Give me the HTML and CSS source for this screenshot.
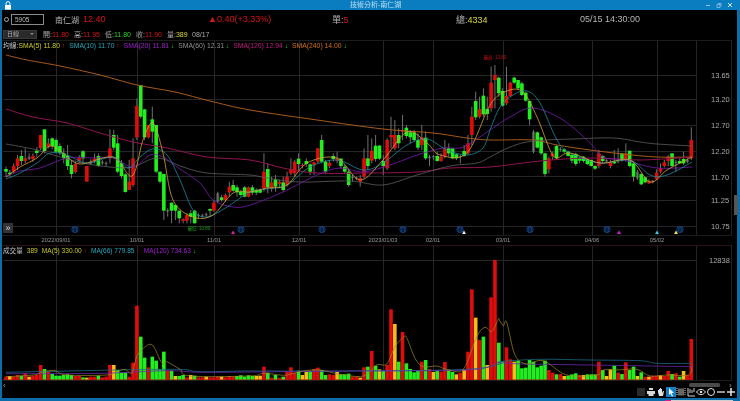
FILE: index.html
```html
<!DOCTYPE html>
<html lang="zh-Hant">
<head>
<meta charset="utf-8">
<title>技術分析-南仁湖</title>
<link rel="stylesheet" href="styles.css">
</head>
<body>
<div class="window">
  <header class="titlebar">
    <svg class="lock" viewBox="0 0 8 9"><path d="M2 4V2.6a2 2 0 0 1 4 0V4" fill="none" stroke="#fff" stroke-width="1"/><rect x="1" y="4" width="6" height="4.6" fill="#fff"/></svg>
    <span class="title">技術分析-南仁湖</span>
    <span class="controls">
      <svg viewBox="0 0 6 6"><path d="M1 3.5h4" stroke="#8fc4e4" stroke-width="1"/></svg>
      <svg viewBox="0 0 6 6"><path d="M2 1.5h3v3M1 2.500h3v3H1z" fill="none" stroke="#8fc4e4" stroke-width=".8"/></svg>
      <svg viewBox="0 0 6 6"><path d="M1 1l4 4M5 1L1 5" stroke="#cfe6f4" stroke-width="1"/></svg>
    </span>
  </header>
  <section class="quote">
    <span class="search-icon"></span>
    <span class="code">5905</span>
    <span class="name">南仁湖</span>
    <span class="price red">12.40</span>
    <span class="change red">▲0.40(+3.33%)</span>
    <span class="single">單:<b class="red">5</b></span>
    <span class="total">總:<b class="yellow">4334</b></span>
    <span class="time">05/15 14:30:00</span>
  </section>
  <section class="ohlc">
    <span class="period">日線<i class="caret"></i></span>
    <span class="stat">開:<b class="red">11.80</b></span>
    <span class="stat">高:<b class="red">11.95</b></span>
    <span class="stat">低:<b class="green">11.80</b></span>
    <span class="stat">收:<b class="red">11.90</b></span>
    <span class="stat">量:<b class="yellow">389</b></span>
    <span class="stat">08/17</span>
  </section>
  <main class="chart">
    <svg id="plot" class="plot" viewBox="0 40 740 358" xmlns="http://www.w3.org/2000/svg"></svg>
    <div class="legend legend-price">
      <span class="c-label">均線:<b class="c-sma5">SMA(5) 11.80</b><i class="red"> ↑</i></span>
      <span class="c-sma10">SMA(10) 11.70<i class="red"> ↑</i></span>
      <span class="c-sma20">SMA(20) 11.81<i class="green"> ↓</i></span>
      <span class="c-sma60">SMA(60) 12.31<i class="green"> ↓</i></span>
      <span class="c-sma120">SMA(120) 12.94<i class="green"> ↓</i></span>
      <span class="c-sma240">SMA(240) 14.00<i class="green"> ↓</i></span>
    </div>
    <div class="legend legend-volume">
      <span class="c-label">成交量</span>
      <span class="c-sma5">389</span>
      <span class="c-sma5">MA(5) 330.00<i class="red"> ↑</i></span>
      <span class="c-sma10">MA(66) 779.85<i class="red"> ↑</i></span>
      <span class="c-sma20">MA(120) 734.63<i class="green"> ↓</i></span>
    </div>
    <button class="expand">»</button>
    <span class="grip"></span>
    <div class="toolbar">
      <svg viewBox="0 0 10 10"><rect x="1" y="1" width="8" height="8" fill="#2a2a2a"/></svg>
      <svg viewBox="0 0 10 10"><path d="M3 1h4v2H3zM1 4h8v3H7.500v2h-5V7H1z" fill="#d8d8d8"/></svg>
      <svg viewBox="0 0 10 10"><path d="M2 5V3h1v2-3h1v3-4h1v4-3h1v4l1-2h1l-1 5H3z" fill="#e4e4e4"/></svg>
      <svg class="active" viewBox="0 0 10 10"><path d="M3 1l5 5H5.500l1.500 3-1 .5L4.500 6.500 3 8z" fill="#fff"/></svg>
      <svg viewBox="0 0 10 10"><rect x="2" y="1.500" width="6" height="7" fill="#666"/><path d="M1 1v8M9 1v8" stroke="#ccc" stroke-width="1" stroke-dasharray="1 1"/></svg>
      <svg viewBox="0 0 10 10"><path d="M2 1v8h7M4 2v4M6 3v3M8 1v4" fill="none" stroke="#ccc" stroke-width="1"/></svg>
      <svg viewBox="0 0 10 10"><path d="M.5 5C3 1.500 7 1.500 9.500 5 7 8.500 3 8.500.5 5z" fill="none" stroke="#ddd" stroke-width="1"/><circle cx="5" cy="5" r="1.300" fill="#ddd"/></svg>
      <svg viewBox="0 0 10 10"><circle cx="5" cy="5" r="3.500" fill="none" stroke="#ddd" stroke-width="1"/></svg>
      <svg viewBox="0 0 10 10"><path d="M1 5h8" stroke="#bbb" stroke-width="1.600"/></svg>
      <svg viewBox="0 0 10 10"><path d="M1 5h8M5 1v8" stroke="#ddd" stroke-width="1.600"/></svg>
    </div>
  </main>
  <div class="taskstrip"><i class="pink"></i><i class="white"></i></div>
</div>
<script src="chart.js"></script>
</body>
</html>
```
FILE: styles.css
```css
* { box-sizing: border-box; }
html, body { margin: 0; padding: 0; background: #000; }
body { width: 740px; height: 401px; overflow: hidden; font-family: "Liberation Sans", "Noto Sans CJK TC", sans-serif; }
b, i { font-weight: normal; font-style: normal; }
.red { color: #d81414; }
.green { color: #1fd81f; }
.yellow { color: #d8d838; }

.window { width: 740px; height: 401px; display: flex; flex-direction: column; background: #000; border-left: 2px solid #0b6ea8; border-right: 3px solid #0b6ea8; position: relative; filter: blur(.35px); }
.titlebar { height: 10px; margin: 0 -3px 0 -2px; background: #0a7cc0; display: flex; align-items: center; padding: 0 4px; position: relative; flex: none; }
.lock { width: 8px; height: 9px; }
.title { position: absolute; left: 350px; top: 0; font-size: 7px; line-height: 10px; color: #bfe0f4; white-space: nowrap; }
.controls { margin-left: auto; display: flex; gap: 5px; padding-right: 3px; }
.controls svg { width: 6px; height: 6px; display: block; }

.quote { height: 18px; flex: none; display: flex; align-items: center; color: #b4b4b4; font-size: 8px; position: relative; white-space: nowrap; }
.search-icon { width: 5px; height: 5px; border: 1px solid #aaa; border-radius: 50%; margin-left: 2px; }
.code { width: 33px; height: 11px; margin-left: 2px; border: 1px solid #8a8a8a; line-height: 9px; padding-left: 3px; font-size: 6.500px; color: #bbb; }
.name { margin-left: 11px; width: 28px; font-size: 8px; color: #b8b8b8; }
.price { width: 125px; font-size: 9px; }
.change { width: 124px; font-size: 9px; }
.single { width: 124px; font-size: 9px; }
.total { width: 124px; font-size: 9px; }
.time { font-size: 9px; }

.ohlc { height: 12px; flex: none; display: flex; align-items: center; font-size: 7px; color: #aaa; white-space: nowrap; }
.period { width: 34px; height: 9px; margin-left: 1px; background: #2a2a2a; border: 1px solid #3a3a3a; font-size: 6px; line-height: 7px; padding-left: 3px; color: #aaa; position: relative; }
.caret { position: absolute; right: 2px; top: 2px; border: 2px solid transparent; border-top-color: #888; }
.stat { margin-left: 6px; width: 27px; }
.stat + .stat { margin-left: 4px; }
.stat:last-child { margin-left: -2px; font-size: 7px; }

.chart { flex: 1; position: relative; min-height: 0; }
.plot { position: absolute; left: -2px; top: 0; width: 740px; height: 358px; display: block; }
.legend { position: absolute; left: 1px; display: flex; gap: 4px; font-size: 6.800px; line-height: 9px; white-space: nowrap; }
.legend-price { top: 1px; }
.legend-volume { top: 206px; left: 1px; gap: 4px; font-size: 6.600px; }
.c-label { color: #c4c4c4; }
.c-sma5 { color: #c8c828; }
.c-sma10 { color: #22a8bc; }
.c-sma20 { color: #a01ed0; }
.c-sma60 { color: #909090; }
.c-sma120 { color: #c01880; }
.c-sma240 { color: #d87010; }
.expand { position: absolute; left: 1px; top: 183px; width: 10px; height: 10px; padding: 0; border: 0; background: #333; color: #ddd; font: 9px/9px "Liberation Sans", sans-serif; }
.grip { position: absolute; right: -1px; top: 155px; width: 4px; height: 20px; background: #555; }
.toolbar { position: absolute; right: 1px; top: 347px; display: flex; height: 10px; }
.toolbar svg { width: 10px; height: 10px; display: block; }
.toolbar .active { background: #1580c8; }
.taskstrip { position: absolute; left: -2px; right: -3px; bottom: 0; height: 3px; background: #0b6ea8; display: flex; padding-left: 665px; }
.taskstrip i { display: block; height: 1.500px; margin-top: 1.500px; }
.taskstrip .pink { width: 6px; background: #e0188c; }
.taskstrip .white { width: 62px; background: #cfcfcf; }
```
FILE: chart.js
```js
(function () {
  var NS = "http://www.w3.org/2000/svg";
  var svg = document.getElementById("plot");
  function el(name, attrs, text) {
    var e = document.createElementNS(NS, name);
    for (var k in attrs) e.setAttribute(k, attrs[k]);
    if (text) e.textContent = text;
    svg.appendChild(e);
    return e;
  }
  var X = function (i) { return 6 + 3.85 * i; };
  var GRID = "#262626";
  var RED = "#e00c0c", GREEN = "#22f01e", YEL = "#f6bc18";

  // frames and grid
  [40.5, 235.5, 245.5, 380.5].forEach(function (y) {
    el("path", { d: "M2 " + y + "H732", stroke: y > 240 && y < 250 ? "#2c1018" : "#1c1c1c", "stroke-width": 1 });
  });
  el("path", { d: "M731.500 40V235M731.500 245V381", stroke: "#222", "stroke-width": 1 });
  [56, 137, 214, 299, 383, 433, 503, 592, 657, 696].forEach(function (x) {
    el("path", { d: "M" + (x + .5) + " 41V235M" + (x + .5) + " 246V380", stroke: GRID, "stroke-width": 1 });
  });
  [75, 99, 125, 151, 176, 200, 226, 260].forEach(function (y) {
    el("path", { d: "M3 " + (y + .5) + "H697", stroke: GRID, "stroke-width": 1 });
  });

  // candles: colour, wick top, body top, body bottom, wick bottom (zoom-space y)
  var C = "G320,327,335,350|G330,338,342,350|R310,318,335,340|R285,295,318,330|G270,288,303,315|R265,295,303,310|N280,290,297,300|R280,288,297,305|G262,272,279,290|R225,225,265,270|G208,208,273,280|R235,250,260,265|G232,235,258,268|G235,240,275,280|G250,258,278,285|G265,280,295,310|G255,288,318,330|G300,315,342,355|R305,312,336,340|R285,293,303,310|G270,274,295,310|R318,318,365,365|N298,308,312,315|R280,295,303,310|G280,288,318,320|N300,305,310,315|N305,308,312,318|R208,265,295,310|G210,225,263,270|G225,250,335,340|G300,310,348,355|G340,343,396,398|R300,365,390,390|R235,295,375,380|R115,138,232,240|G75,75,170,175|G148,148,232,240|R195,195,232,235|G140,178,215,250|G195,195,335,340|G335,335,365,370|G342,342,452,480|N445,450,455,470|G428,428,452,490|G435,435,452,480|G452,452,475,490|R475,478,483,490|R460,465,482,490|G450,460,470,490|G450,452,490,490|N460,465,468,475|N462,466,470,472|N458,462,466,470|G445,447,452,470|R420,428,452,455|N395,400,425,430|G405,412,420,425|R400,405,420,425|R365,380,397,410|G360,375,392,395|G375,382,397,410|G390,395,405,410|G378,382,410,412|R380,382,410,412"
    + "|G375,382,398,405|G385,390,398,405|G385,390,398,400|R280,335,385,395|G310,327,382,400|R350,367,385,395|G345,358,380,395|R360,365,372,385|G350,367,390,395|R335,350,375,380|R295,327,340,345|R300,305,340,350|G280,296,312,330|R310,315,318,325|G295,303,312,320|G310,313,335,345|R305,307,315,345|R265,265,305,310|G225,240,305,310|G300,305,335,340|R300,308,318,325|G280,288,297,305|R275,295,303,310|G295,296,318,325|G315,320,335,340|G330,335,375,380|N345,350,355,365|N350,352,356,360|R345,355,365,380|R265,295,350,355|G225,295,318,330|R235,272,302,310|G225,257,297,305|G255,257,296,300|G285,303,318,345|R235,240,325,330|R170,225,232,265|R180,225,265,270|G205,225,250,265|R165,210,215,240|G195,203,228,235|G210,217,232,250|G210,217,240,245|G220,240,263,270|R195,232,255,270|G215,233,295,300|N285,290,295,318|N285,288,292,300|G275,288,303,305|R280,290,303,305|R240,265,290,295|G250,265,280,290|G265,265,295,297|G280,283,295,300|N285,288,290,310|G255,273,288,290|R225,250,280,285|R140,170,225,255|G95,123,172,180|R110,147,170,175|G85,107,163,170|G110,147,162,180"
    + "|R20,68,145,155|R15,45,60,145|G50,53,100,110|G85,93,137,140|R20,108,130,135|R65,68,108,112|G50,53,68,72|G60,60,85,90|G65,70,105,108|G95,98,122,125|G122,123,178,195|N210,215,275,280|G215,217,263,265|G230,232,280,285|G278,280,342,350|R290,295,328,340|R275,280,290,300|G255,258,295,300|N262,266,270,275|G265,268,275,280|G272,275,288,290|G280,285,302,310|G278,282,312,318|G290,295,302,310|G288,290,303,308|G295,298,312,315|G298,300,318,320|G315,318,326,330|R270,280,318,325|G285,288,303,310|N295,300,305,310|R300,305,318,325|G270,305,310,312|N265,300,305,310|G280,280,302,305|R250,280,298,305|G272,272,318,322|G310,310,350,365|N330,335,355,360|G340,342,373,375|G350,352,367,370|R358,362,370,372|N360,362,366,370|R328,338,358,360|R310,325,335,340|R300,307,318,322|R285,290,303,318|G280,280,318,320|N300,305,310,335|G295,303,310,312|G275,297,310,315|N295,300,306,310|R202,240,295,300";
  var yP = function (z) { return 60 + z / 3; };
  C.split("|").forEach(function (s, i) {
    var col = s[0], v = s.slice(1).split(",").map(Number), x = X(i);
    el("path", { d: "M" + x + " " + yP(v[0]) + "V" + yP(v[3]), stroke: "#707070", "stroke-width": 1 });
    if (col === "N") {
      el("rect", { x: x - 1.500, y: yP(v[1]), width: 3, height: Math.max(1, (v[2] - v[1]) / 3), fill: "#7a7a7a", opacity: .6 });
    } else {
      el("rect", { x: x - 1.800, y: yP(v[1]), width: 3.600, height: Math.max(1, (v[2] - v[1]) / 3), fill: col === "R" ? RED : GREEN });
    }
  });

  function smooth(p) {
    var d = "M" + p[0][0] + " " + p[0][1];
    for (var i = 0; i < p.length - 1; i++) {
      var a = p[Math.max(i - 1, 0)], b = p[i], c = p[i + 1], e = p[Math.min(i + 2, p.length - 1)];
      d += "C" + (b[0] + (c[0] - a[0]) / 6) + " " + (b[1] + (c[1] - a[1]) / 6) + " " + (c[0] - (e[0] - b[0]) / 6) + " " + (c[1] - (e[1] - b[1]) / 6) + " " + c[0] + " " + c[1];
    }
    return d;
  }
  function line(str, color, w) {
    var p = str.split(" ").map(function (s) { return s.split(",").map(Number); });
    el("path", { d: smooth(p), fill: "none", stroke: color, "stroke-width": w || .8 });
  }
  line("6,55 27,60 60,66 100,75 137,85 175,92 210,101 250,110 317,120 383,129 433,133 467,138 490,140 533,140 557,145 590,150 623,154 657,157 692,157", "#a85a18", 1);
  line("6,109 33,117 67,123 100,133 133,142 167,148 207,157 250,160 283,168 317,173 367,173 417,172 450,168 490,167 540,161 590,158 640,160 692,157", "#901450", 1);
  line("6,144 33,149 50,154 83,163 110,167 133,167 157,158 183,167 207,173 250,175 267,178 300,182 350,181 383,185 417,175 450,166 477,163 490,157 510,147 533,141 573,139 613,138 640,142 657,144 692,146", "#5e5e5e");
  line("6,177 20,171 40,168 67,158 93,158 113,158 133,167 150,155 163,157 177,167 200,183 213,200 233,207 250,205 283,192 317,175 340,168 363,172 390,165 417,155 443,148 463,147 490,130 510,117 533,108 563,120 590,143 603,157 623,160 657,168 692,167", "#7a1ab0");
  line("6,179 20,173 37,163 50,153 67,155 87,163 113,157 128,168 140,157 153,149 167,155 180,180 193,210 207,217 227,207 250,192 267,189 287,185 310,167 337,160 363,170 383,163 407,145 427,139 447,150 467,155 483,148 490,130 500,107 513,95 527,91 540,103 557,140 570,153 600,163 630,160 650,175 667,175 692,162", "#1a8ca0");
  line("6,177 20,167 37,158 50,146 63,153 80,164 113,157 132,176 143,140 153,123 163,153 173,200 193,217 213,215 233,193 250,192 267,188 287,185 307,163 337,158 360,180 383,160 407,132 427,143 440,155 467,153 490,105 507,91 523,92 537,117 550,150 557,158 570,153 600,163 630,160 650,182 667,170 692,157", "#d8a03a");

  // volume bars
  var V = "R410 Y408 R410 R405 G407 R400 Y410 R407 R405 R375 G387 R395 G402 G407 G407 G405 G403 G405 R408 R408 G412 Y413 R410 R410 G407 R412 R410 R375 Y375 G390 G398 G397 R410 R368 R197 G290 G353 R382 G350 G362 G388 G335 R392 G392 Y408 G408 G405 R412 Y405 G407 R412 R412 Y410 R412 R412 R410 Y410 R412 R408 R410 G408 G406 G410 G406 "
    + "G408 Y408 Y407 R380 G398 R413 G405 R413 G410 R395 R382 R398 G392 Y405 Y395 G393 R387 R383 G390 G405 R403 R405 Y396 G403 G403 G401 R410 R410 Y413 R382 G380 R333 G377 Y388 G393 R375 R208 Y252 G365 R276 G370 G387 G397 G392 R365 G360 R387 Y396 G392 R395 R366 G390 G396 Y403 R398 Y390 R335 R148 Y233 R300 G290 Y375 R172 R60 G308 "
    + "G365 R322 R358 Y365 G362 G385 G383 G360 G365 G382 G377 G362 R390 R398 G403 R402 Y408 G407 G403 G400 R405 Y405 G403 G403 G403 R365 G390 Y408 Y388 G377 R398 G402 R367 G390 G380 Y408 G397 R410 Y410 R407 R407 Y406 R408 R393 G402 R400 G410 Y393 R405 R297";
  var yV = function (z) { return 240 + z / 3; };
  el("path", { d: "M3 379.500H693", stroke: "#a81010", "stroke-width": 1 });
  V.split(" ").forEach(function (s, i) {
    var z = +s.slice(1);
    el("rect", { x: X(i) - 1.800, y: yV(z), width: 3.600, height: 379.500 - yV(z), fill: s[0] === "R" ? RED : s[0] === "G" ? GREEN : YEL });
  });
  function zoneLine(parts, color, w) {
    var out = [];
    parts.forEach(function (part) {
      part[1].split(" ").forEach(function (s) {
        var a = s.split(",").map(Number);
        out.push((part[0] + a[0] / 3).toFixed(1) + "," + yV(a[1]).toFixed(1));
      });
    });
    line(out.join(" "), color, w);
  }
  zoneLine([[0, "18,397 500,388 600,395 750,393"], [250, "300,393 650,388 750,372"], [490, "30,365 150,358 300,360 450,362 500,370 606,370"]], "#1a6a84");
  zoneLine([[0, "18,401 300,400 500,392 600,397 750,396"], [250, "300,393 650,390 740,370"], [490, "30,368 100,372 300,375 606,380"]], "#6a28b0");
  zoneLine([[0, "18,410 100,405 130,395 165,392 200,405 320,405 350,395 375,388 395,400 410,350 430,325 457,315 485,368 500,365 540,388 570,408 750,408"], [250, "40,400 90,405 110,405 160,393 210,390 270,403 340,408 380,375 410,372 435,320 460,292 470,293 495,355 520,380 560,378 590,388 640,388 680,290 705,262 725,275 745,238"], [490, "28,240 40,257 50,247 75,345 110,372 160,362 230,405 320,405 340,390 380,390 440,388 480,408 530,405 595,405 606,380"]], "#a08c24", .7);

  // axis labels
  function label(x, y, t, color, size, anchor) {
    el("text", { x: x, y: y, fill: color, "font-size": size, "text-anchor": anchor || "middle", "font-family": "Liberation Sans, Noto Sans CJK TC, sans-serif" }, t);
  }
  [["13.65", 78], ["13.20", 101.500], ["12.70", 128], ["12.20", 154], ["11.70", 179.500], ["11.25", 203], ["10.75", 229]].forEach(function (a) {
    label(711, a[1], a[0], "#a8a8a8", 7.500, "start");
  });
  label(709, 263, "12838", "#a8a8a8", 7.500, "start");
  [["2022/09/01", 56], ["10/01", 137], ["11/01", 214], ["12/01", 299], ["2023/01/03", 383], ["02/01", 433], ["03/01", 503], ["04/06", 592], ["05/02", 657]].forEach(function (a) {
    label(a[1], 241.500, a[0], "#989898", 5.800);
  });
  label(199, 230, "最低: 10.80", "#14a014", 4.500);
  label(495, 58.500, "最高: 13.80", "#c01010", 4.500);

  // event markers
  [75, 241, 322, 403, 460, 530, 607, 680].forEach(function (x) {
    el("circle", { cx: x, cy: 229.500, r: 3.200, fill: "#04142e", stroke: "#124a94", "stroke-width": .8 });
    el("text", { x: x, y: 231.300, fill: "#2a68b8", "font-size": 4.500, "text-anchor": "middle", "font-family": "Noto Sans CJK TC, sans-serif" }, "月");
  });
  [[233, "#e020a0"], [464, "#e8e8e8"], [619, "#d020e0"], [657, "#30c8e8"], [676, "#e8e060"]].forEach(function (m) {
    el("path", { d: "M" + (m[0] - 2) + " 234L" + m[0] + " 230.500L" + (m[0] + 2) + " 234Z", fill: m[1] });
  });

  // scroller
  el("text", { x: 3, y: 388, fill: "#999", "font-size": 8, "font-family": "Liberation Sans, sans-serif" }, "‹");
  el("text", { x: 729, y: 388, fill: "#999", "font-size": 8, "font-family": "Liberation Sans, sans-serif" }, "›");
  el("rect", { x: 689, y: 383, width: 31, height: 4, rx: 1.500, fill: "#4a4a4a" });
})();
```
